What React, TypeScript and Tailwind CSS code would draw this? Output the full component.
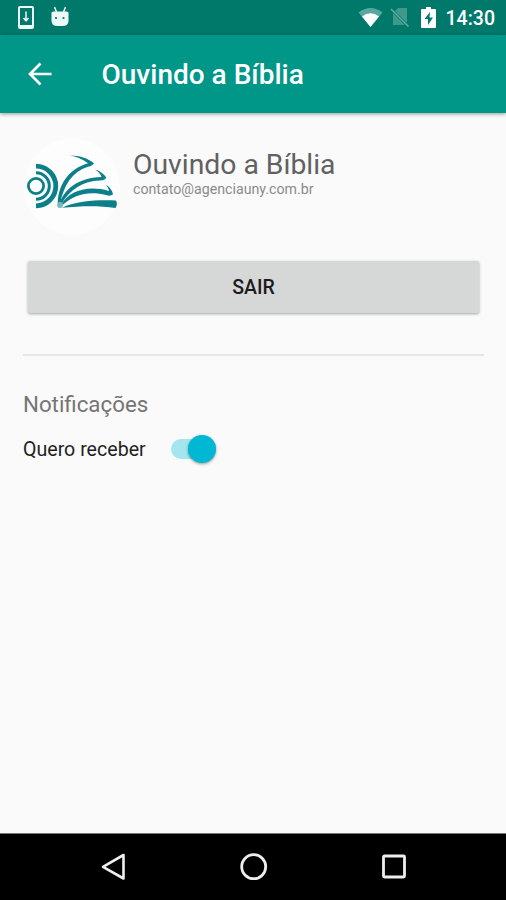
import type React from "react"
import { useState } from "react"

const Logo: React.FC = () => (
  <svg viewBox="0 0 98 98" className="w-[98px] h-[98px] shrink-0" fill="#0b808a">
    <circle cx="49" cy="49" r="48" fill="#fdfdfd" />
    <g fill="none" stroke="#0b808a">
      <path d="M13 28.2a19.8 19.8 0 0 1 0 39.6" strokeWidth="4.8" />
      <path d="M13 34.7a13.3 13.3 0 0 1 0 26.6" strokeWidth="3" />
      <circle cx="13" cy="48" r="9" fill="#fdfdfd" stroke="#fdfdfd" strokeWidth="3" />
      <circle cx="13" cy="48" r="7.6" strokeWidth="2.8" />
    </g>
    <path d="M34.8 65C35 48 45 31 65 25.3C60 21 53 18.5 47 17.5C55 17.3 65 20 71 25.2Q70 27.5 65 28.8C49 34 41 47 37.2 65Z" />
    <path d="M36.5 65C42 51 54 40 78.5 39C77.5 36 75 33.5 72 31.3C77 33 81 36 83.3 39.5Q82 42.5 77 42.6C60 43.2 47 51.5 38.5 66Z" />
    <path d="M38.5 66C46 54 63 46.5 86 53C86 51 84.5 49 83 47C87 49 89.5 53 90 56.5Q87 58.5 83 57C66 52.5 51 56.5 39.5 67Z" />
    <path d="M39 69.8C55 62.2 75 62 93 62.5Q95 66 92.5 70C75 67.5 58 68 39 69.8Z" />
    <circle cx="37" cy="67" r="3" fill="#7bb8bd" />
  </svg>
)

const StatusBar: React.FC = () => (
  <div className="h-[35px] bg-[#00796b] flex items-center justify-between pl-[18px] pr-[11px]">
    <div className="flex items-center gap-[17px]">
      <svg viewBox="0 0 16 23" className="w-4 h-[23px]" fill="none" stroke="#eef8f6">
        <rect x="1" y="1" width="14" height="21" rx="1" strokeWidth="2" />
        <path d="M1 20.5h14" strokeWidth="3" />
        <path d="M8 5.5v9M5.5 12L8 14.8 10.5 12" strokeWidth="1.5" />
      </svg>
      <svg viewBox="0 0 18 21" className="w-[18px] h-[21px] mb-0.5" fill="#eef8f6">
        <path d="M.5 7q0-1.5 2-1.5h13q2 0 2 1.5v7.5q0 5.5-6 5.5H6.5q-6 0-6-5.5z" />
        <path d="M3.5 1l2 5M14.5 1l-2 5" stroke="#eef8f6" strokeWidth="1.5" />
        <circle cx="5" cy="12" r="1.1" fill="#00796b" />
        <circle cx="12.5" cy="12" r="1.1" fill="#00796b" />
      </svg>
    </div>
    <div className="flex items-center">
      <svg viewBox="0 0 25 21" className="w-[25px] h-[21px]">
        <path d="M.5 5.5Q12.5-3.500 24.5 5.5L12.5 20z" fill="#59a89f" />
        <path d="M4 9.5Q12.5 3 21 9.5L12.5 20z" fill="#fff" />
      </svg>
      <svg viewBox="0 0 20 21" className="w-5 h-[21px] ml-[7px]">
        <path d="M8 1h9v17H3V6z" fill="#41998d" />
        <path d="M1 2l17 17" stroke="#00796b" strokeWidth="3" />
        <path d="M1 2l17.5 17.5" stroke="#63aaa1" strokeWidth="1.6" />
      </svg>
      <svg viewBox="0 0 15 21" className="w-[15px] h-[21px] ml-[11px]">
        <path d="M5 0h5v2h4q1 0 1 1v17q0 1-1 1H1q-1 0-1-1V3q0-1 1-1h4z" fill="#fff" />
        <path d="M9 5L3.5 12H7v6l5-7.5H8.5z" fill="#00796b" />
      </svg>
      <span className="ml-[10px] pt-0.5 text-[19.5px] leading-none font-medium text-white">14:30</span>
    </div>
  </div>
)

const App: React.FC = () => {
  const [enabled, setEnabled] = useState(true)

  return (
    <div className="h-[900px] flex flex-col bg-[#fafafa] font-['Roboto',sans-serif]">
      <StatusBar />

      <header className="h-[78px] shrink-0 bg-[#009688] flex items-center pl-7 shadow-[0_1px_4px_rgba(0,0,0,0.4)]">
        <button type="button" aria-label="Voltar">
          <svg viewBox="0 0 24 24" className="w-6 h-6" fill="none" stroke="#fff" strokeWidth="2.7">
            <path d="M23.5 12H3M12.5 1.5L2 12l10.5 10.5" />
          </svg>
        </button>
        <h1 className="ml-[49.5px] pt-0.5 text-[28px] leading-none font-medium text-white">Ouvindo a Bíblia</h1>
      </header>

      <main className="flex-1 px-[23px] pt-[25px]">
        <div className="flex">
          <Logo />
          <div className="ml-3 pt-[11px]">
            <h2 className="text-[28.3px] leading-8 text-[#616161]">Ouvindo a Bíblia</h2>
            <p className="text-[14.2px] leading-4 text-[#8a8a8a]">contato@agenciauny.com.br</p>
          </div>
        </div>

        <div className="pl-[5px] pr-1 mt-[25px]">
          <button
            type="button"
            className="w-full h-[52px] pt-0.5 rounded-[2px] bg-[#d6d7d7] text-[19.5px] font-medium text-[#1b1b1b] shadow-[0_1px_3px_rgba(0,0,0,0.35)]"
          >
            SAIR
          </button>
        </div>

        <hr className="mt-[41px] -mr-px border-t-2 border-[#e6e6e6]" />

        <h3 className="mt-[32px] text-[22.3px] leading-8 text-[#757575]">Notificações</h3>
        <div className="mt-[13px] flex items-center h-8">
          <span className="pt-0.5 text-[19.6px] text-[#1f1f1f]">Quero receber</span>
          <button
            type="button"
            role="switch"
            aria-checked={enabled}
            aria-label="Quero receber"
            onClick={() => setEnabled(!enabled)}
            className={`ml-[25px] w-[45px] h-5 rounded-full bg-[#a5e6ee] flex items-center ${enabled ? "justify-end" : "justify-start"}`}
          >
            <span className="w-7 h-7 rounded-full bg-[#00b8d4] shadow-[0_1px_3px_rgba(0,0,0,0.4)]" />
          </button>
        </div>
      </main>

      <nav className="h-[67px] shrink-0 bg-black border-t border-[#777] pl-[100px] pr-[98px] flex items-center justify-between">
        <svg viewBox="0 0 28 28" className="w-7 h-7" fill="none" stroke="#eee" strokeWidth="2.6" strokeLinejoin="round">
          <path d="M23.5 2v23.5L3 13.8z" />
        </svg>
        <svg viewBox="0 0 28 28" className="w-7 h-7" fill="none" stroke="#eee" strokeWidth="2.8">
          <circle cx="13.7" cy="13.7" r="12" />
        </svg>
        <svg viewBox="0 0 28 28" className="w-7 h-7" fill="none" stroke="#eee" strokeWidth="2.8">
          <rect x="3.5" y="3" width="21" height="21" rx="1" />
        </svg>
      </nav>
    </div>
  )
}

export default App
